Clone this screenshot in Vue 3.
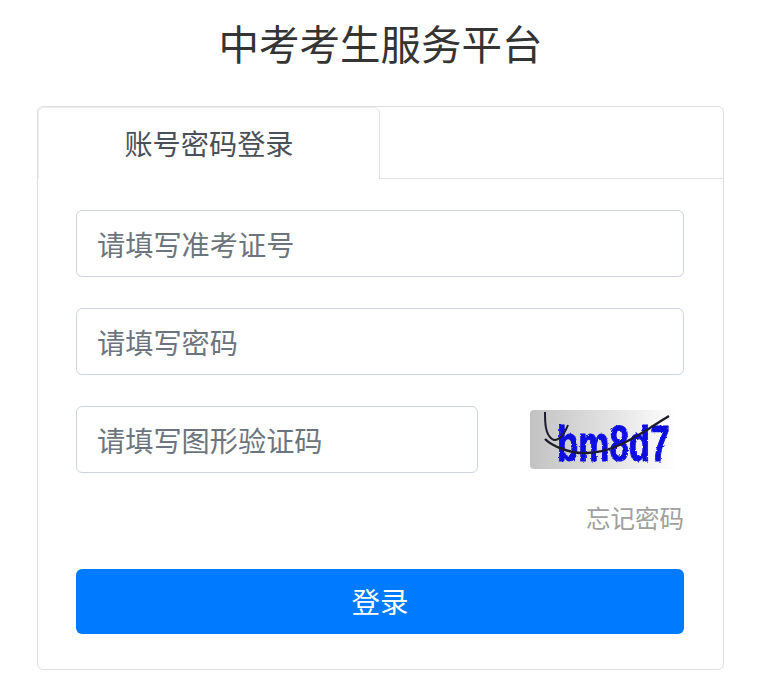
<script setup>
import { ref } from 'vue'

const account = ref('')
const password = ref('')
const code = ref('')
</script>

<template>
	<div class="page">
		<h1 class="title">中考考生服务平台</h1>
		<div class="card">
			<div class="tabs">
				<div class="tab">账号密码登录</div>
			</div>
			<form class="form" @submit.prevent>
				<input v-model="account" class="field" type="text" placeholder="请填写准考证号" />
				<input v-model="password" class="field" type="password" placeholder="请填写密码" />
				<div class="code-row">
					<input v-model="code" class="field code-input" type="text" placeholder="请填写图形验证码" />
					<svg class="captcha" viewBox="0 0 154 59" width="154" height="59">
						<defs>
							<linearGradient id="captcha-bg" x1="0" y1="0" x2="1" y2="0">
								<stop offset="0" stop-color="#c2c2c2" />
								<stop offset="0.55" stop-color="#e4e4e4" />
								<stop offset="0.95" stop-color="#ffffff" />
							</linearGradient>
							<filter id="captcha-rough" x="-5%" y="-5%" width="110%" height="110%">
								<feTurbulence type="fractalNoise" baseFrequency="0.5" numOctaves="2" seed="4" />
								<feDisplacementMap in="SourceGraphic" scale="3" />
								<feGaussianBlur stdDeviation="0.6" />
							</filter>
							<filter id="captcha-soft">
								<feGaussianBlur stdDeviation="0.35" />
							</filter>
						</defs>
						<rect width="154" height="59" rx="4" fill="url(#captcha-bg)" />
						<g filter="url(#captcha-rough)">
							<text class="captcha-text" transform="translate(27 51) scale(0.76 1.08)">bm8d7</text>
						</g>
						<g filter="url(#captcha-soft)" fill="none" stroke="#1c1c2c">
							<path d="M15 2 C15 12 15 24 22 29 C26 32 33 28 38 15" stroke-width="2" />
							<path d="M15 29 C22 36 40 44 57 43 C78 42 92 35 117 20 C125 15 132 10 139 6" stroke-width="2.4" />
						</g>
					</svg>
				</div>
				<div class="forgot-row">
					<a class="forgot">忘记密码</a>
				</div>
				<button class="submit" type="submit">登录</button>
			</form>
		</div>
	</div>
</template>

<style scoped>
.page {
	width: 758px;
	height: 682px;
	overflow: hidden;
	font-family: "Noto Sans CJK SC", "Liberation Sans", sans-serif;
	background: #fff;
}

.title {
	height: 106px;
	margin: 0;
	padding: 13px 0 0 3px;
	box-sizing: border-box;
	text-align: center;
	font-size: 40.5px;
	line-height: 60px;
	font-weight: 400;
	color: #343434;
}

.card {
	width: 687px;
	height: 564px;
	margin-left: 37px;
	box-sizing: border-box;
	border: 1px solid #dfdfdf;
	border-radius: 6px;
	display: flex;
	flex-direction: column;
}

.tabs {
	height: 72px;
	flex: none;
	box-sizing: border-box;
	border-bottom: 1px solid #dee2e6;
	display: flex;
}

.tab {
	width: 342px;
	height: 72px;
	box-sizing: border-box;
	border: 1px solid #ececec;
	border-right-color: #dee2e6;
	border-bottom: 0;
	border-radius: 6px 6px 0 0;
	background: #fff;
	text-align: center;
	font-size: 28.2px;
	line-height: 70px;
	color: #495057;
}

.form {
	flex: 1;
	padding: 31px 39px 35px 38px;
	display: flex;
	flex-direction: column;
}

.field {
	display: block;
	width: 100%;
	height: 67px;
	flex: none;
	margin-bottom: 31px;
	padding: 0 20px;
	box-sizing: border-box;
	border: 1px solid #ced4da;
	border-radius: 6px;
	outline: 0;
	font-family: inherit;
	font-size: 28.2px;
	color: #495057;
}

.field::placeholder {
	color: #6c757d;
	opacity: 1;
}

.code-row {
	display: flex;
	justify-content: space-between;
	align-items: flex-start;
}

.code-input {
	width: 402px;
	margin-bottom: 0;
}

.captcha {
	margin-top: 4px;
	flex: none;
}

.captcha-text {
	font-family: "Liberation Sans", sans-serif;
	font-size: 46px;
	font-weight: 700;
	fill: #0c0ce0;
	stroke: #0c0ce0;
	stroke-width: 1;
}

.forgot-row {
	margin-top: 26px;
	height: 43px;
	text-align: right;
}

.forgot {
	font-size: 24.5px;
	line-height: 38px;
	color: #a0a0a0;
}

.submit {
	height: 65px;
	margin-top: 27px;
	padding: 0 0 2px;
	border: 0;
	border-radius: 6px;
	background: #007bff;
	color: #fff;
	font-family: inherit;
	font-size: 28.5px;
}
</style>
